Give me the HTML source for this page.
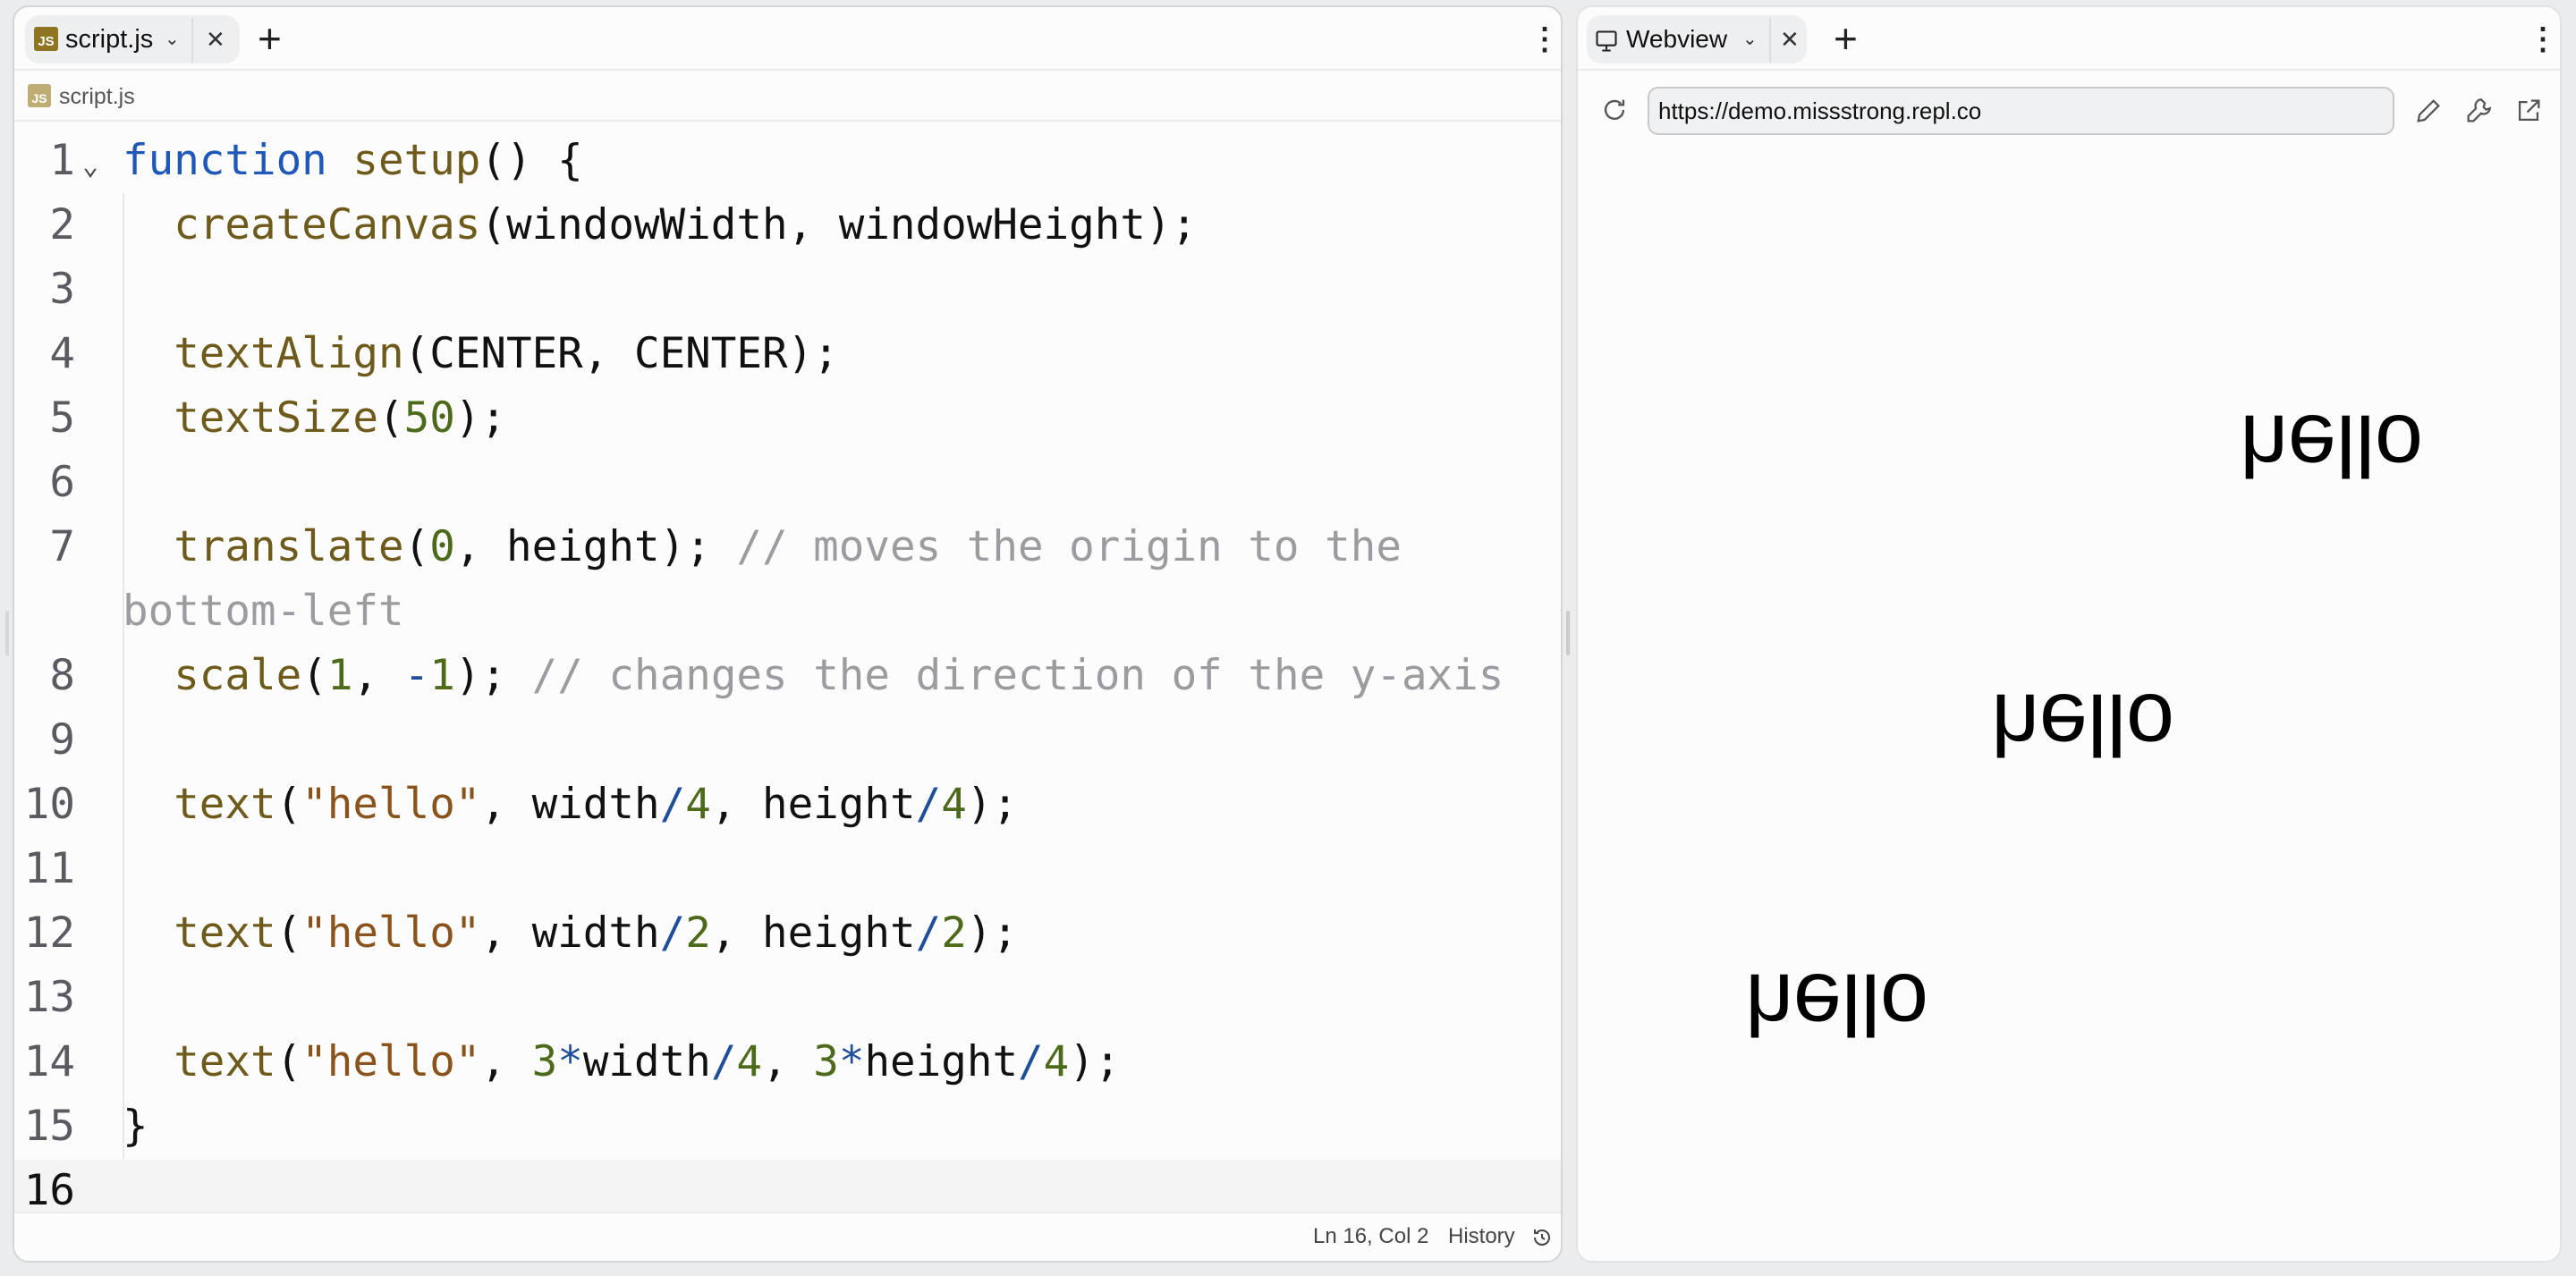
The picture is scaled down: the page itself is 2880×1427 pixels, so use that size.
<!DOCTYPE html>
<html><head><meta charset="utf-8"><style>
*{margin:0;padding:0;box-sizing:border-box}
body{width:2880px;height:1427px;background:#ebecee;position:relative;overflow:hidden;font-family:"Liberation Sans",sans-serif}
.panel{position:absolute;background:#fcfcfc;border:2px solid #d4d5d8;border-radius:18px;overflow:hidden}
.ab{position:absolute}
.code{position:absolute;left:0;top:144px;width:100%;font-family:"DejaVu Sans Mono","Liberation Mono",monospace;font-size:47.5px;color:#111}
.row{position:absolute;left:0;height:72px;line-height:72px;white-space:pre;width:100%}
.num{position:absolute;width:68px;text-align:right;left:0;color:#5a5a60}
.tx{position:absolute;left:121px}
.k{color:#1f58b8}.f{color:#6e5b1c}.n{color:#4c6a1a}.s{color:#8a531b}.c{color:#9b9ba0}.o{color:#1f4f9a}
.hello{position:absolute;font-size:97px;color:#000;transform:scaleY(-1);line-height:1}
</style></head><body>
<div class="panel" style="left:14px;top:6px;width:1733px;height:1406px">
  <div class="ab" style="left:12px;top:9px;width:240px;height:54px;background:#eeeff1;border-radius:16px"></div>
  <div class="ab" style="left:22px;top:22px;width:27px;height:27px;background:#8f7522;border-radius:3px;color:#fff;font-size:15px;font-weight:bold;line-height:34px;text-align:center">JS</div>
  <div class="ab" style="left:57px;top:16px;font-size:29px;color:#111;line-height:40px">script.js</div>
  <div class="ab" style="left:168px;top:16px;font-size:20px;color:#333;line-height:40px">&#x2304;</div>
  <div class="ab" style="left:198px;top:12px;width:2px;height:50px;background:#dcdde0"></div>
  <div class="ab" style="left:214px;top:16px;font-size:26px;color:#333;line-height:40px">✕</div>
  <div class="ab" style="left:272px;top:10px;font-size:46px;color:#222;line-height:50px;font-weight:300">+</div>
  <div class="ab" style="left:1694px;top:18px;font-size:34px;color:#222;line-height:36px;font-weight:bold">&#8942;</div>
  <div class="ab" style="left:0;top:69px;width:100%;height:2px;background:#ebebed"></div>
  <div class="ab" style="left:15px;top:86px;width:26px;height:26px;background:#bfae74;border-radius:3px;color:#fff;font-size:14px;font-weight:bold;line-height:32px;text-align:center">JS</div>
  <div class="ab" style="left:50px;top:82px;font-size:25px;color:#555;line-height:36px">script.js</div>
  <div class="ab" style="left:0;top:126px;width:100%;height:2px;background:#ebebed"></div>
  <div class="ab" style="left:121px;top:208px;width:2px;height:1080px;background:#e8e8ea"></div>
  <div class="ab" style="left:0;top:1289px;width:100%;height:58px;background:#f4f4f5"></div>
  <div class="code" style="top:136px">
    <div class="row" style="top:0"><span class="num">1</span><span class="ab" style="left:76px;font-size:30px;color:#444;top:6px">&#x2304;</span><span class="tx"><span class="k">function</span> <span class="f">setup</span>() {</span></div>
    <div class="row" style="top:72px"><span class="num">2</span><span class="tx">  <span class="f">createCanvas</span>(windowWidth, windowHeight);</span></div>
    <div class="row" style="top:144px"><span class="num">3</span></div>
    <div class="row" style="top:216px"><span class="num">4</span><span class="tx">  <span class="f">textAlign</span>(CENTER, CENTER);</span></div>
    <div class="row" style="top:288px"><span class="num">5</span><span class="tx">  <span class="f">textSize</span>(<span class="n">50</span>);</span></div>
    <div class="row" style="top:360px"><span class="num">6</span></div>
    <div class="row" style="top:432px"><span class="num">7</span><span class="tx">  <span class="f">translate</span>(<span class="n">0</span>, height); <span class="c">// moves the origin to the</span></span></div>
    <div class="row" style="top:504px"><span class="tx"><span class="c">bottom-left</span></span></div>
    <div class="row" style="top:576px"><span class="num">8</span><span class="tx">  <span class="f">scale</span>(<span class="n">1</span>, <span class="o">-</span><span class="n">1</span>); <span class="c">// changes the direction of the y-axis</span></span></div>
    <div class="row" style="top:648px"><span class="num">9</span></div>
    <div class="row" style="top:720px"><span class="num">10</span><span class="tx">  <span class="f">text</span>(<span class="s">"hello"</span>, width<span class="o">/</span><span class="n">4</span>, height<span class="o">/</span><span class="n">4</span>);</span></div>
    <div class="row" style="top:792px"><span class="num">11</span></div>
    <div class="row" style="top:864px"><span class="num">12</span><span class="tx">  <span class="f">text</span>(<span class="s">"hello"</span>, width<span class="o">/</span><span class="n">2</span>, height<span class="o">/</span><span class="n">2</span>);</span></div>
    <div class="row" style="top:936px"><span class="num">13</span></div>
    <div class="row" style="top:1008px"><span class="num">14</span><span class="tx">  <span class="f">text</span>(<span class="s">"hello"</span>, <span class="n">3</span><span class="o">*</span>width<span class="o">/</span><span class="n">4</span>, <span class="n">3</span><span class="o">*</span>height<span class="o">/</span><span class="n">4</span>);</span></div>
    <div class="row" style="top:1080px"><span class="num">15</span><span class="tx">}</span></div>
    <div class="row" style="top:1152px"><span class="num" style="color:#111">16</span></div>
  </div>
  <div class="ab" style="left:0;top:1347px;width:100%;height:2px;background:#ebebed"></div>
  <div class="ab" style="left:1452px;top:1360px;font-size:24px;color:#444;line-height:30px">Ln 16, Col 2</div>
  <div class="ab" style="left:1603px;top:1360px;font-size:24px;color:#444;line-height:30px">History</div>
  <svg class="ab" style="left:1696px;top:1364px" width="24" height="24" viewBox="0 0 24 24" fill="none" stroke="#444" stroke-width="2"><path d="M4 12a8 8 0 1 0 2.5-5.8M4 3v4h4M12 8v4l3 2"/></svg>
</div>
<div class="ab" style="left:1751px;top:683px;width:4px;height:50px;background:#c9cacd;border-radius:2px"></div>
<div class="ab" style="left:6px;top:683px;width:4px;height:50px;background:#d6d7da;border-radius:2px"></div>
<div class="panel" style="left:1762px;top:6px;width:1102px;height:1406px;border-color:#e2e3e6">
  <div class="ab" style="left:10px;top:9px;width:246px;height:54px;background:#eeeff1;border-radius:16px"></div>
  <svg class="ab" style="left:18px;top:24px" width="28" height="28" viewBox="0 0 24 24" fill="none" stroke="#222" stroke-width="1.8"><rect x="3" y="3" width="18" height="13" rx="1.5"/><path d="M12 16v4M8 21h8"/></svg>
  <div class="ab" style="left:54px;top:16px;font-size:28px;color:#111;line-height:40px">Webview</div>
  <div class="ab" style="left:184px;top:16px;font-size:20px;color:#333;line-height:40px">&#x2304;</div>
  <div class="ab" style="left:214px;top:12px;width:2px;height:50px;background:#dcdde0"></div>
  <div class="ab" style="left:226px;top:16px;font-size:26px;color:#333;line-height:40px">✕</div>
  <div class="ab" style="left:286px;top:10px;font-size:46px;color:#222;line-height:50px;font-weight:300">+</div>
  <div class="ab" style="left:1062px;top:18px;font-size:34px;color:#222;line-height:36px;font-weight:bold">&#8942;</div>
  <div class="ab" style="left:0;top:69px;width:100%;height:2px;background:#ebebed"></div>
  <svg class="ab" style="left:24px;top:98px" width="34" height="34" viewBox="0 0 24 24" fill="none" stroke="#555" stroke-width="1.7"><path d="M19 12a7 7 0 1 1-2-5M19 4v4h-4"/></svg>
  <div class="ab" style="left:78px;top:89px;width:835px;height:54px;background:#f0f1f3;border:2px solid #c8c9cc;border-radius:12px;font-size:26px;color:#111;line-height:50px;padding-left:10px">https://demo.missstrong.repl.co</div>
  <svg class="ab" style="left:934px;top:99px" width="34" height="34" viewBox="0 0 24 24" fill="none" stroke="#555" stroke-width="1.6"><path d="M4 20l1-5L16 4l4 4L9 19z"/></svg>
  <svg class="ab" style="left:990px;top:99px" width="34" height="34" viewBox="0 0 24 24" fill="none" stroke="#555" stroke-width="1.6"><path d="M14 3a5 5 0 0 0-4 7L4 16v4h4l6-6a5 5 0 0 0 7-4l-3 1-2-2 1-3z"/></svg>
  <svg class="ab" style="left:1046px;top:99px" width="34" height="34" viewBox="0 0 24 24" fill="none" stroke="#555" stroke-width="1.6"><path d="M11 5H5v14h14v-6M14 4h6v6M20 4l-9 9"/></svg>
  <div class="hello" style="left:740px;top:442px">hello</div>
  <div class="hello" style="left:462px;top:754px">hello</div>
  <div class="hello" style="left:187px;top:1067px">hello</div>
</div>
</body></html>
